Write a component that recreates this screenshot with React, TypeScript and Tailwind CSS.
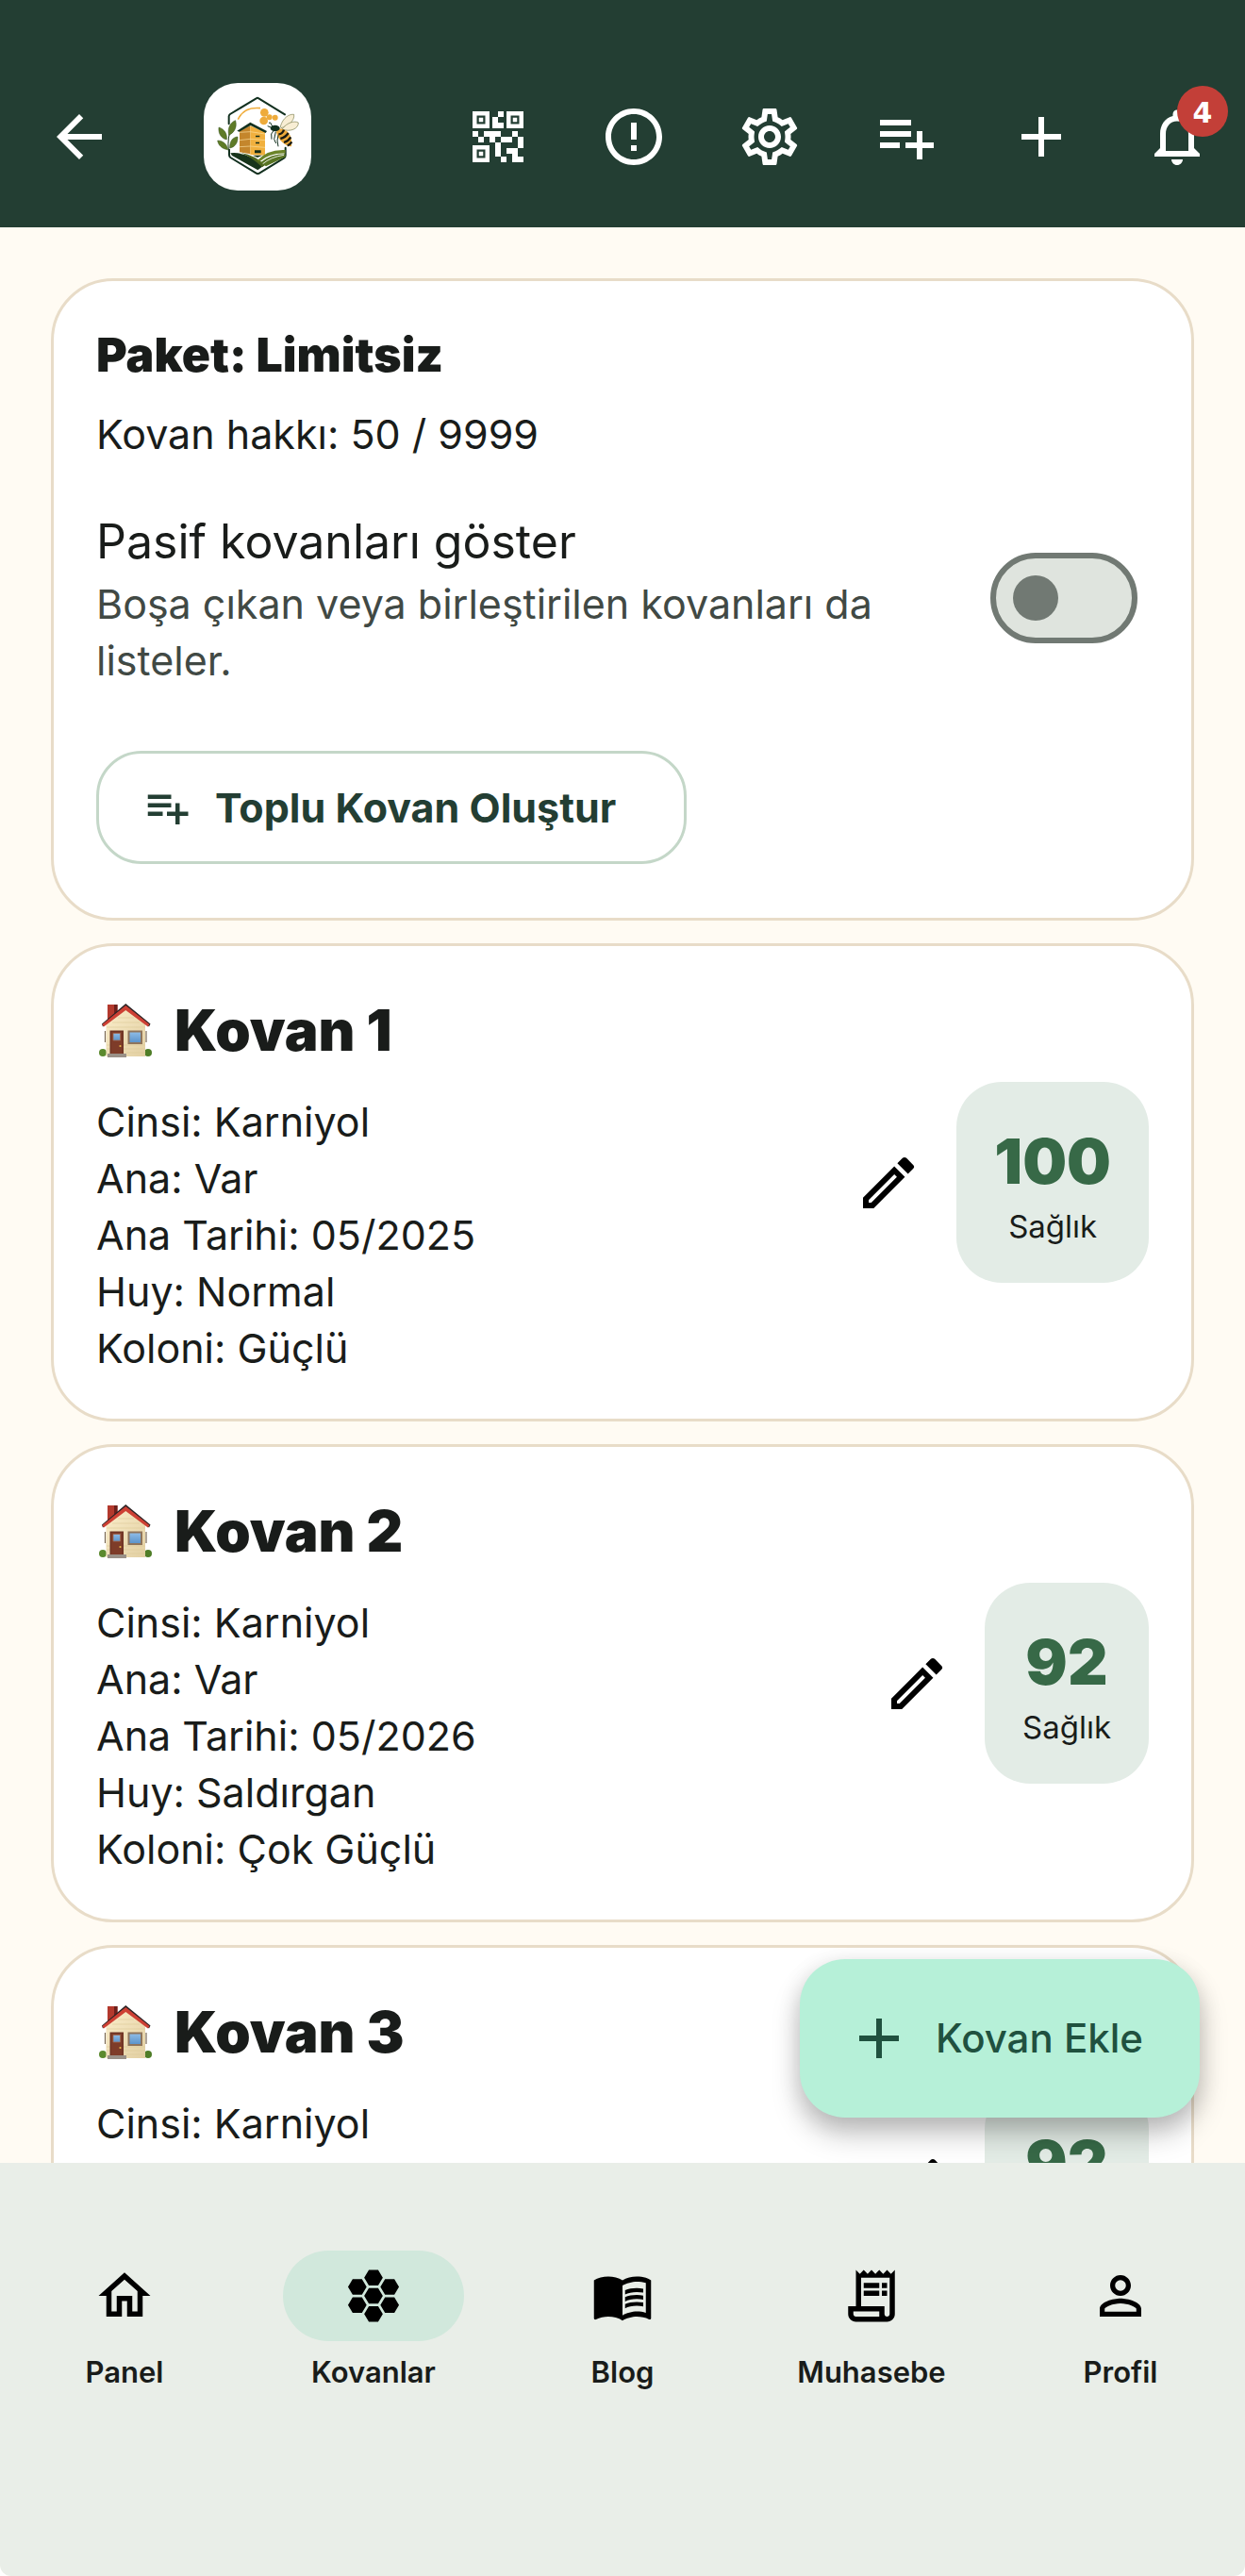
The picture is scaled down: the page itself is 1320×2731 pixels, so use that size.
import type { ReactNode } from "react";
import {
  MdAdd,
  MdArrowBack,
  MdErrorOutline,
  MdHive,
  MdMenuBook,
  MdNotificationsNone,
  MdOutlineEdit,
  MdOutlineHome,
  MdOutlineReceiptLong,
  MdOutlineSettings,
  MdPersonOutline,
  MdPlaylistAdd,
  MdQrCode2,
} from "react-icons/md";

type Hive = {
  name: string;
  details: string[];
  health: number;
};

const hives: Hive[] = [
  {
    name: "Kovan 1",
    details: ["Cinsi: Karniyol", "Ana: Var", "Ana Tarihi: 05/2025", "Huy: Normal", "Koloni: Güçlü"],
    health: 100,
  },
  {
    name: "Kovan 2",
    details: ["Cinsi: Karniyol", "Ana: Var", "Ana Tarihi: 05/2026", "Huy: Saldırgan", "Koloni: Çok Güçlü"],
    health: 92,
  },
  {
    name: "Kovan 3",
    details: ["Cinsi: Karniyol", "Ana: Var", "Ana Tarihi: 05/2026", "Huy: Normal", "Koloni: Güçlü"],
    health: 92,
  },
];

function Logo() {
  return (
    <svg viewBox="648 84 342 342" className="size-[114px] rounded-[36px] bg-white" role="img" aria-label="Arıcılık logosu">
      <g fill="none" stroke="#12301f" strokeWidth="6" strokeLinecap="round" strokeLinejoin="round">
        <path d="M906 184 L823 133 Q819 130 815 133 L732 183 Q728 186 728 190 V214" />
        <path d="M729 296 V313 Q729 318 733 321 L815 371 Q820 374 825 371 L903 323 Q908 320 908 314 V290" />
      </g>
      <path d="M757 200 Q775 159 828 164" fill="none" stroke="#f0ad3c" strokeWidth="5" />
      <g fill="#eeab3b">
        <circle cx="841" cy="178" r="13" />
        <circle cx="839" cy="204" r="13" />
        <circle cx="857" cy="193" r="9" />
        <circle cx="875" cy="194" r="9" />
      </g>
      <path d="M727 300 Q722 255 738 222" fill="none" stroke="#1e3a1c" strokeWidth="3" />
      <g fill="#5f7b27" stroke="#32501c" strokeWidth="1.5">
        <path d="M728 250 C722 225 735 208 749 203 C755 225 745 242 728 250Z" />
        <path d="M721 264 C700 260 694 240 696 225 C715 231 723 246 721 264Z" />
        <path d="M731 291 C730 268 741 256 756 255 C757 275 747 288 731 291Z" />
        <path d="M725 296 C705 294 694 281 692 267 C710 267 723 280 725 296Z" />
      </g>
      <path d="M762 236 L796 220 V310 L762 304Z" fill="#c4862c" />
      <path d="M796 220 L843 240 V314 L796 312Z" fill="#f1b03e" />
      <path d="M762 241 L796 239 L843 246 M762 266 L796 262 L843 266 M762 287 L796 285 L843 289" fill="none" stroke="#fbe0a0" strokeWidth="2" />
      <path d="M754 236 L796 209 L849 237 L845 243 L797 219 L761 239Z" fill="#12301f" />
      <path d="M813 251h13v5h-13z M813 272h12v5h-12z M810 298h20v9h-20z" fill="#152c18" />
      <path d="M733 307 Q780 301 840 346 L820 361 L738 315Z" fill="#17341b" />
      <path d="M766 306 Q812 314 843 345 L834 352 Q800 319 766 306Z" fill="#4c641f" />
      <path d="M818 331 Q850 294 908 297 V308 Q858 306 826 334Z" fill="#6b8429" />
      <path d="M828 337 Q860 310 908 310 V319 L846 349Z" fill="#587422" />
      <path d="M836 341 Q860 320 903 313" fill="none" stroke="#fff" strokeWidth="2.5" />
      <path d="M804 314 L819 321 L834 314Z" fill="#17341b" />
      <g fill="#f8eed4" stroke="#7d8050" strokeWidth="2">
        <path d="M892 222 C900 194 920 182 935 184 C938 205 915 221 894 227Z" />
        <path d="M897 231 C913 209 938 203 949 210 C950 230 922 241 897 231Z" />
      </g>
      <path d="M882 229 C912 227 932 248 927 286 C907 286 883 263 879 240Z" fill="#eca93a" />
      <g fill="none" stroke="#1a1c14" strokeWidth="7">
        <path d="M886 247 Q898 247 903 233" />
        <path d="M892 261 Q908 257 917 243" />
        <path d="M903 273 Q917 269 925 256" />
        <path d="M914 283 Q922 281 928 271" />
      </g>
      <ellipse cx="875" cy="228" rx="15" ry="10" fill="#12301f" />
      <path d="M866 222 L860 210 L855 211 M862 225 L851 221 M870 236 L863 246 L864 263 M877 239 L872 263 L878 276 M885 250 L882 267 L885 286" fill="none" stroke="#12301f" strokeWidth="3" />
    </svg>
  );
}

function HouseIcon() {
  return (
    <svg viewBox="0 0 56 57" className="h-[57px] w-14" aria-hidden="true">
      <defs>
        <linearGradient id="wall" x1="0" y1="0" x2="1" y2="1">
          <stop offset="0" stopColor="#fbeecb" />
          <stop offset="1" stopColor="#e2cfa2" />
        </linearGradient>
        <linearGradient id="glass" x1="0" y1="0" x2="0" y2="1">
          <stop offset="0" stopColor="#8dbbe6" />
          <stop offset="1" stopColor="#5c94cb" />
        </linearGradient>
      </defs>
      <path d="M9 1h10.500v9L9 19z" fill="#b3392d" />
      <path d="M16 1h3.500v9L16 13z" fill="#6d1f1b" />
      <path d="M6.500 29v12M50 29v12" stroke="#7a6a58" strokeWidth="1.200" />
      <circle cx="4" cy="52" r="4" fill="#5b8a2e" />
      <circle cx="52" cy="52" r="4" fill="#4f7d27" />
      <path d="M7.500 20L28.300 4L49 20v36H7.500z" fill="url(#wall)" />
      <path d="M8 25h41M8 48h41M8 44h41M29 52h20M14 20h29M20 15h17" stroke="#dcc998" strokeWidth="0.600" />
      <path d="M28.300 0L3 21.500l1 3L28.300 4l24.700 20.500l1.500-3z" fill="#2b2325" />
      <path d="M28.300 2L3.500 22l1.500 2.500L28.300 7l23.500 17.500l1.700-2.500z" fill="#cd4034" />
      <path d="M11.500 28.500H26V53H11.500z" fill="#6f3424" />
      <path d="M13 30h11.500v23H13z" fill="#7e3c29" />
      <path d="M15 31.500h7.500V39H15z" fill="url(#glass)" stroke="#a46b52" strokeWidth="0.800" />
      <circle cx="22.500" cy="45" r="1.100" fill="#e9b94b" />
      <path d="M30.500 28.500h15.500v14.500H30.500z" fill="#8f755c" />
      <path d="M32.500 30.500h11.500V41H32.500z" fill="url(#glass)" />
      <path d="M9 53h20v4H9z" fill="#9a9188" />
    </svg>
  );
}

function HeaderButton({ label, children }: { label: string; children: ReactNode }) {
  return (
    <button type="button" aria-label={label} className="relative flex size-36 items-center justify-center text-[72px] text-white">
      {children}
    </button>
  );
}

function Header() {
  return (
    <header className="flex shrink-0 items-center bg-[#233e33] pt-[49px] pl-3">
      <HeaderButton label="Geri">
        <MdArrowBack />
      </HeaderButton>
      <div className="my-[39px] ml-[60px]">
        <Logo />
      </div>
      <div className="ml-auto flex">
        <HeaderButton label="QR kod">
          <MdQrCode2 />
        </HeaderButton>
        <HeaderButton label="Uyarılar">
          <MdErrorOutline />
        </HeaderButton>
        <HeaderButton label="Ayarlar">
          <MdOutlineSettings />
        </HeaderButton>
        <HeaderButton label="Toplu ekle">
          <MdPlaylistAdd />
        </HeaderButton>
        <HeaderButton label="Ekle">
          <MdAdd />
        </HeaderButton>
        <HeaderButton label="Bildirimler">
          <MdNotificationsNone />
          <span className="absolute top-[18px] right-[18px] flex size-[54px] items-center justify-center rounded-full bg-[#c33f38] pt-1 font-['DejaVu_Sans',sans-serif] text-[30px] leading-none font-bold">
            4
          </span>
        </HeaderButton>
      </div>
    </header>
  );
}

function PackageCard() {
  return (
    <section className="rounded-[66px] border-[3px] border-[#e8dcc8] bg-white px-[45px] pt-[45px] pb-[57px]">
      <h1 className="text-[50px] leading-[66px] font-black">Paket: Limitsiz</h1>
      <p className="mt-[21px] text-[43px] leading-[60px]">Kovan hakkı: 50 / 9999</p>
      <label className="mt-12 flex items-center justify-between gap-12 pr-3">
        <span className="min-w-0 flex-1">
          <span className="block text-[50px] leading-[72px]">Pasif kovanları göster</span>
          <span className="block max-w-[860px] text-[43px] leading-[60px] text-[#414944]">
            Boşa çıkan veya birleştirilen kovanları da listeler.
          </span>
        </span>
        <input
          type="checkbox"
          role="switch"
          className="flex h-24 w-[156px] shrink-0 appearance-none items-center rounded-full border-[6px] border-[#717973] bg-[#dfe4de] px-[18px] before:size-12 before:rounded-full before:bg-[#717973] before:content-[''] checked:justify-end"
        />
      </label>
      <button
        type="button"
        className="mt-[66px] flex items-center gap-6 rounded-[48px] border-[3px] border-[#c4d7c8] py-[27px] pr-[72px] pl-[45px] text-[43px] leading-[60px] font-bold text-[#233e33]"
      >
        <MdPlaylistAdd className="text-[54px]" />
        Toplu Kovan Oluştur
      </button>
    </section>
  );
}

function HiveCard({ hive }: { hive: Hive }) {
  return (
    <article className="flex items-center rounded-[66px] border-[3px] border-[#e8dcc8] bg-white p-[45px]">
      <div className="min-w-0 flex-1">
        <h2 className="mb-[23px] flex items-center gap-6 pl-[3px] text-[60px] leading-[88px] font-black">
          <HouseIcon />
          {hive.name}
        </h2>
        <ul className="text-[43px] leading-[60px]">
          {hive.details.map((line) => (
            <li key={line}>{line}</li>
          ))}
        </ul>
      </div>
      <button type="button" aria-label={`${hive.name} düzenle`} className="flex size-36 items-center justify-center text-[72px] text-black">
        <MdOutlineEdit />
      </button>
      <div className="flex flex-col items-center gap-[3px] rounded-[48px] bg-[#e3ece6] px-10 pt-[42px] pb-9">
        <span className="text-[66px] leading-[84px] font-black text-[#376947]">{hive.health}</span>
        <span className="text-[33px] leading-[48px]">Sağlık</span>
      </div>
    </article>
  );
}

const tabs = [
  { label: "Panel", Icon: MdOutlineHome, active: false },
  { label: "Kovanlar", Icon: MdHive, active: true },
  { label: "Blog", Icon: MdMenuBook, active: false },
  { label: "Muhasebe", Icon: MdOutlineReceiptLong, active: false },
  { label: "Profil", Icon: MdPersonOutline, active: false },
];

function BottomNav() {
  return (
    <nav className="grid shrink-0 grid-cols-5 bg-[#e9eee8] pt-[93px] pb-[192px]">
      {tabs.map(({ label, Icon, active }) => (
        <a key={label} href={`#${label.toLowerCase()}`} aria-current={active ? "page" : undefined} className="flex flex-col items-center gap-[9px]">
          <span
            className={
              active
                ? "flex h-24 w-48 items-center justify-center rounded-full bg-[#d1e8dc] text-[66px] text-black"
                : "flex h-24 w-48 items-center justify-center rounded-full text-[66px] text-black"
            }
          >
            <Icon />
          </span>
          <span className="text-[31px] leading-[48px] font-semibold">{label}</span>
        </a>
      ))}
    </nav>
  );
}

export default function App() {
  return (
    <div className="flex h-screen flex-col overflow-hidden rounded-b-xl bg-[#fffbf3] font-['Inter',sans-serif] text-[#191c1a]">
      <Header />
      <div className="relative min-h-0 flex-1">
        <main className="flex h-full flex-col gap-6 overflow-y-auto px-[54px] pt-[54px] [scrollbar-width:none] *:shrink-0">
          <PackageCard />
          {hives.map((hive) => (
            <HiveCard key={hive.name} hive={hive} />
          ))}
        </main>
        <button
          type="button"
          className="absolute right-12 bottom-12 flex items-center gap-6 rounded-[48px] bg-[#b6f0d8] py-12 pr-[60px] pl-12 text-[42px] leading-[72px] font-medium text-[#20513f] shadow-[0_18px_30px_rgba(0,0,0,0.22),0_6px_24px_rgba(0,0,0,0.12)]"
        >
          <MdAdd className="text-[72px]" />
          Kovan Ekle
        </button>
      </div>
      <BottomNav />
    </div>
  );
}
